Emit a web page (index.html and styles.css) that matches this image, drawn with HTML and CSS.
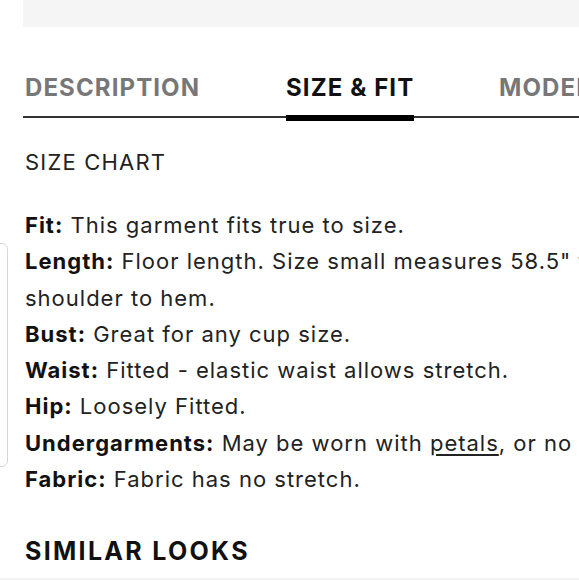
FILE: index.html
```html
<!DOCTYPE html>
<html>
<head>
<meta charset="utf-8">
<link rel="stylesheet" href="styles.css">
</head>
<body>
<div class="page">
  <div class="top-bar"></div>
  <nav class="tabs">
    <div class="tab">DESCRIPTION</div>
    <div class="tab active">SIZE &amp; FIT</div>
    <div class="tab">MODEL</div>
  </nav>
  <div class="side-box"></div>
  <section class="content">
    <div class="size-chart">SIZE CHART</div>
    <div class="specs">
      <p><b>Fit:</b> This garment fits true to size.</p>
      <p><b>Length:</b> Floor length. Size small measures 58.5" from shoulder to hem.</p>
      <p><b>Bust:</b> Great for any cup size.</p>
      <p><b>Waist:</b> Fitted - elastic waist allows stretch.</p>
      <p><b>Hip:</b> Loosely Fitted.</p>
      <p class="nowrap"><b>Undergarments:</b> May be worn with <a href="#">petals</a>, or no bra.</p>
      <p><b>Fabric:</b> Fabric has no stretch.</p>
    </div>
    <h2 class="similar">SIMILAR LOOKS</h2>
  </section>
  <div class="bottom-strip"></div>
</div>
</body>
</html>
```

FILE: styles.css
```css
html, body {
  margin: 0;
  padding: 0;
  background: #fff;
  overflow: hidden;
}
.page {
  position: relative;
  width: 579px;
  height: 580px;
  overflow: hidden;
  font-family: "Inter", "Noto Sans", sans-serif;
  color: #222;
}
.top-bar {
  margin-left: 23px;
  height: 27px;
  background: #f5f5f5;
}
.tabs {
  display: flex;
  margin: 47px 0 0 23px;
  width: 680px;
  border-bottom: 2px solid #333;
  height: 42px;
}
.tab {
  font-weight: 700;
  font-size: 24px;
  letter-spacing: 1.1px;
  color: #777;
  padding-left: 2px;
  line-height: 28px;
  box-sizing: border-box;
}
.tab:nth-child(1) { width: 261px; }
.tab:nth-child(2) { width: 213px; }
.tab.active {
  color: #111;
  position: relative;
}
.tab.active::after {
  content: "";
  position: absolute;
  left: 2px;
  width: 128px;
  bottom: -5px;
  height: 6px;
  background: #000;
}
.side-box {
  position: absolute;
  left: -10px;
  top: 243px;
  width: 16px;
  height: 222px;
  border: 1px solid #d8d8d8;
  border-radius: 6px;
}
.content {
  padding-left: 25px;
  width: 680px;
}
.size-chart {
  margin-top: 32px;
  font-size: 22px;
  letter-spacing: 1.2px;
  line-height: 24px;
  color: #222;
}
.specs {
  margin-top: 33px;
}
.specs p {
  margin: 0;
  font-size: 22px;
  line-height: 36.3px;
  letter-spacing: 1px;
}
.specs b {
  font-weight: 700;
  color: #111;
}
.specs a {
  color: #222;
  text-decoration: underline;
  text-underline-offset: 3px;
}
.nowrap { white-space: nowrap; }
.similar {
  margin: 40px 0 0;
  font-size: 25px;
  font-weight: 700;
  letter-spacing: 2.3px;
  color: #111;
  line-height: 28px;
}
.bottom-strip {
  position: absolute;
  left: 0;
  right: 0;
  bottom: 0;
  height: 2px;
  background: #f3f3f3;
}
```
